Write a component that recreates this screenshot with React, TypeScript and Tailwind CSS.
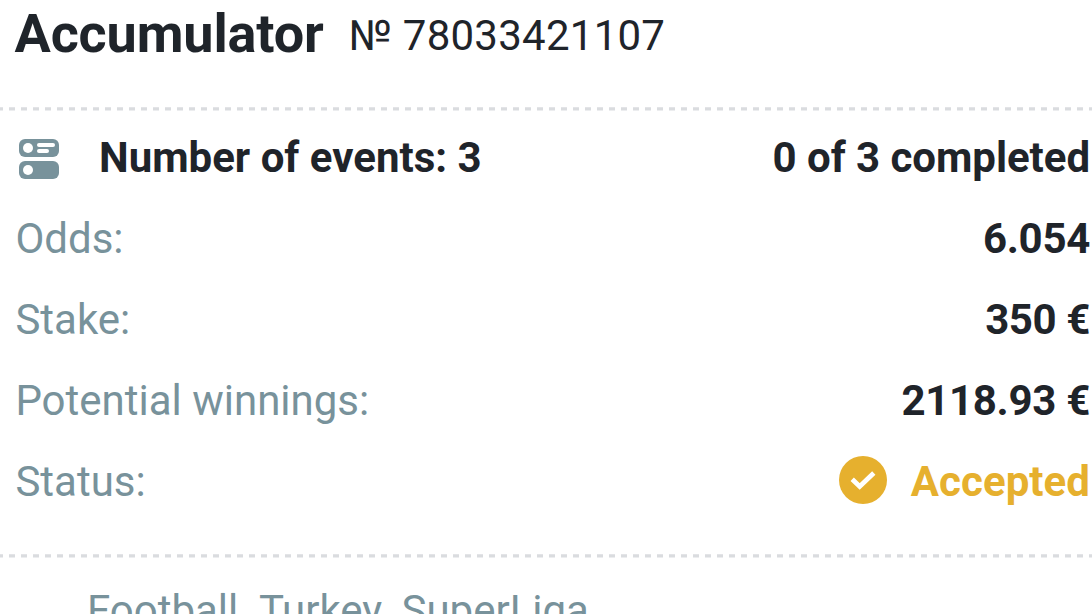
const rows = [
  { label: 'Odds:', value: '6.054', spacing: 'tracking-[-0.3px]' },
  { label: 'Stake:', value: '350 €', spacing: 'tracking-[-0.4px]' },
  { label: 'Potential winnings:', value: '2118.93 €', spacing: 'tracking-[-0.3px]' },
];

function Divider() {
  return (
    <svg className="block h-1 w-full shrink-0" viewBox="0 0 1092 4">
      <line x1="0" y1="1.8" x2="1092" y2="1.8" stroke="#dadcdf" strokeWidth="3.2" strokeDasharray="6 6" strokeDashoffset="3" />
    </svg>
  );
}

function EventsIcon() {
  return (
    <svg className="size-10" viewBox="0 0 40 40">
      <rect width="40" height="18" rx="6" fill="#78929b" />
      <rect y="22" width="40" height="18" rx="6" fill="#78929b" />
      <circle cx="9" cy="9" r="5" fill="white" />
      <circle cx="9" cy="31" r="5" fill="white" />
      <rect x="18" y="4" width="18" height="4" rx="2" fill="white" />
      <rect x="18" y="10" width="12" height="4" rx="2" fill="white" />
    </svg>
  );
}

export default function App() {
  return (
    <div className="flex h-[614px] w-[1092px] flex-col overflow-hidden bg-white pr-0.5 font-['Roboto',sans-serif] text-[42px] leading-[81px] text-[#1f242a]">
      <div className="flex h-[107px] shrink-0 items-start pl-[14.5px]">
        <h1 className="text-[54px] font-bold leading-[68px] tracking-[-0.15px]">Accumulator</h1>
        <span className="ml-[25px] text-[42px] leading-[72px] tracking-[0.25px]">№ 78033421107</span>
      </div>
      <div className="-mr-0.5">
        <Divider />
      </div>
      <div className="mt-1.5 flex h-[81px] shrink-0 items-center justify-between pl-[19px] font-bold">
        <div className="flex items-center">
          <div className="mt-0.5">
            <EventsIcon />
          </div>
          <span className="ml-10">Number of events: 3</span>
        </div>
        <span className="tracking-[-0.05px]">0 of 3 completed</span>
      </div>
      {rows.map((row) => (
        <div key={row.label} className="flex h-[81px] shrink-0 justify-between pl-[15.4px]">
          <span className="text-[#78929b]">{row.label}</span>
          <span className={`font-bold ${row.spacing}`}>{row.value}</span>
        </div>
      ))}
      <div className="flex h-[81px] shrink-0 items-center justify-between pl-[15.4px]">
        <span className="text-[#78929b]">Status:</span>
        <div className="flex items-center gap-6 font-bold text-[#e6b02e]">
          <svg className="mb-[3px] size-12" viewBox="0 0 48 48">
            <circle cx="24" cy="24" r="24" fill="#e6b02e" />
            <path d="M13.2 23.2L20.7 30.4L34.8 17" fill="none" stroke="white" strokeWidth="4.8" />
          </svg>
          <span className="tracking-[0.05px]">Accepted</span>
        </div>
      </div>
      <div className="-mr-0.5 pt-8">
        <Divider />
      </div>
      <div className="shrink-0 pl-[87px] pt-3 text-[#78929b]">Football. Turkey. SuperLiga</div>
    </div>
  );
}
